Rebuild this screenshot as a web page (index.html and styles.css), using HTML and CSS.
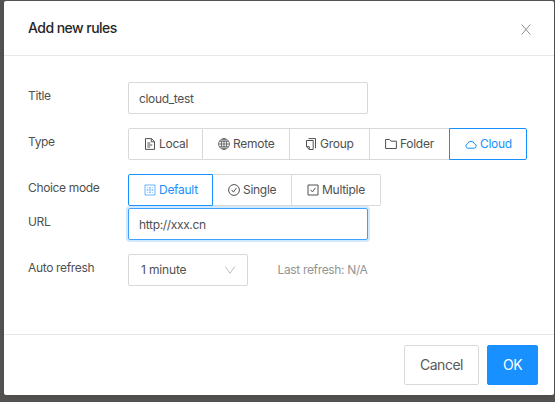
FILE: index.html
```
<!DOCTYPE html>
<html lang="en">
<head>
<meta charset="utf-8">
<title>Add new rules</title>
<link rel="stylesheet" href="styles.css">
</head>
<body>
<main class="modal">
  <header class="modal-header">
    <h1>Add new rules</h1>
    <svg class="close" viewBox="0 0 10 11"><path d="M.7.5 9.3 10.5M9.3.5.7 10.5"/></svg>
  </header>
  <form class="modal-body">
    <div class="row">
      <span class="label">Title</span>
      <div class="input">cloud_test</div>
    </div>
    <div class="row">
      <span class="label">Type</span>
      <div class="segments types">
        <div class="segment"><svg class="icon" viewBox="0 0 12 12"><path d="M1.5.6h6l3 3v7.8h-9zM7.3.6v3.2h3.2M3.3 5h3M3.3 7h5M3.3 9h3"/></svg><span>Local</span></div>
        <div class="segment"><svg class="icon globe" viewBox="0 0 12 12"><circle cx="6" cy="6" r="5.4"/><ellipse cx="6" cy="6" rx="2.6" ry="5.4"/><path d="M6 .6v10.8M.6 6h10.8M1.4 3.3h9.2M1.4 8.7h9.2"/></svg><span>Remote</span></div>
        <div class="segment"><svg class="icon" viewBox="0 0 12 12"><path d="M1.5 2.5h6.7v9H4.3L1.5 8.8zM1.5 8.7h2.8v2.8M3.5.6h7v9.6"/></svg><span>Group</span></div>
        <div class="segment"><svg class="icon" viewBox="0 0 12 12"><path d="M.6 1.5h4l1.5 1.7h5.3v7.3H.6z"/></svg><span>Folder</span></div>
        <div class="segment active"><svg class="icon" viewBox="0 0 12 12"><path d="M2.9 10.2h6.2a2.2 2.2 0 0 0 .5-4.3 3.8 3.8 0 0 0-7.2 0 2.2 2.2 0 0 0 .5 4.3z"/></svg><span>Cloud</span></div>
      </div>
    </div>
    <div class="row compact">
      <span class="label">Choice mode</span>
      <div class="segments modes">
        <div class="segment active"><svg class="icon soft" viewBox="0 0 12 12"><path d="M1 1h10v10H1z"/><path class="dots" d="M5.2 3h1.6v1.4H5.2zM5.2 5.3h1.6v1.4H5.2zM5.2 7.6h1.6V9H5.2zM2.8 5.2h1.5v1.6H2.8zM7.7 5.2h1.5v1.6H7.7zM3 3h.7v.7H3zM8.3 3H9v.7h-.7zM3 8.3h.7V9H3zM8.3 8.3H9V9h-.7z"/></svg><span>Default</span></div>
        <div class="segment"><svg class="icon" viewBox="0 0 12 12"><circle cx="6" cy="6" r="5.4"/><path d="m3.6 5.9 1.8 2.2 3.1-4.2"/></svg><span>Single</span></div>
        <div class="segment"><svg class="icon" viewBox="0 0 12 12"><path d="M1 1h10v10H1zM3.6 5.8l1.8 2.1 3-4"/></svg><span>Multiple</span></div>
      </div>
    </div>
    <div class="row">
      <span class="label">URL</span>
      <div class="input focused">http://xxx.cn</div>
    </div>
    <div class="row">
      <span class="label">Auto refresh</span>
      <div class="select"><span>1 minute</span><svg class="arrow" viewBox="0 0 12 10"><path d="M1.2 1.5 6 8.3l4.8-6.8"/></svg></div>
      <span class="hint">Last refresh: N/A</span>
    </div>
  </form>
  <footer class="modal-footer">
    <button class="button">Cancel</button>
    <button class="button primary">OK</button>
  </footer>
</main>
</body>
</html>
```

FILE: styles.css
```
* { box-sizing: border-box; }
body {
  margin: 0;
  padding: 1px 1px 7px 4px;
  height: 402px;
  overflow: hidden;
  background: #555453;
  color: #505050;
  font: 12px/18px Inter, "Liberation Sans", sans-serif;
  letter-spacing: -.34px;
}
.modal {
  display: flex;
  flex-direction: column;
  height: 394px;
  background: #fff;
  border-radius: 2px;
  box-shadow: 0 3px 10px rgba(0, 0, 0, .12);
}
.modal-header {
  display: flex;
  align-items: center;
  justify-content: space-between;
  height: 55px;
  padding: 0 23px 0 24px;
  border-bottom: 1px solid #e8e8e8;
}
h1 {
  margin: 0;
  color: #262626;
  font-size: 14px;
  font-weight: 500;
  letter-spacing: -.54px;
}
svg { fill: none; stroke: currentColor; flex: none; }
.close { width: 10px; height: 11px; margin-top: 2px; color: #8c8c8c; }
.modal-body { flex: 1; padding: 26px 24px 0; }
.row { display: flex; height: 32px; margin-bottom: 14px; }
.row.compact { margin-bottom: 2px; }
.label { width: 100px; padding-top: 5px; }
.input {
  width: 240px;
  height: 32px;
  padding: 7px 10px;
  border: 1px solid #d9d9d9;
  border-radius: 2px;
}
.input.focused { border-color: #40a0ff; box-shadow: 0 0 0 2px #d1e9ff; }
.segments { display: grid; height: 32px; }
.types { grid-template-columns: 75px 87px 80px 80px 77px; }
.modes { grid-template-columns: 85px 79px 89px; }
.segment {
  display: flex;
  align-items: center;
  gap: 3px;
  padding-left: 15px;
  border: 1px solid #d9d9d9;
  border-left-width: 0;
  letter-spacing: -.28px;
}
.segment:first-child { border-left-width: 1px; border-radius: 2px 0 0 2px; }
.segment:last-child { border-radius: 0 2px 2px 0; }
.segment.active { border-color: #1890ff; color: #1890ff; }
.types .active { border-left-width: 1px; margin-left: -1px; }
.icon { width: 12px; height: 12px; }
.globe { stroke-width: .8; }
.soft { opacity: .65; }
.dots { fill: currentColor; stroke: none; }
.select {
  display: flex;
  align-items: center;
  justify-content: space-between;
  width: 120px;
  height: 32px;
  padding: 0 11px 0 12px;
  border: 1px solid #d9d9d9;
  border-radius: 2px;
}
.select span { letter-spacing: -.15px; }
.arrow { width: 12px; height: 10px; color: #bfbfbf; }
.hint { margin-left: 29.5px; padding-top: 7px; color: #949494; }
.modal-footer {
  display: flex;
  gap: 8px;
  justify-content: flex-end;
  height: 61px;
  padding: 10px 16px 0;
  border-top: 1px solid #e8e8e8;
}
.button {
  width: 75px;
  height: 40px;
  padding: 0;
  border: 1px solid #d9d9d9;
  border-radius: 2px;
  background: #fff;
  color: #595959;
  font: 14px/20px Inter, "Liberation Sans", sans-serif;
  letter-spacing: -.5px;
}
.button.primary { width: 51px; border-color: #1890ff; background: #1890ff; color: #fff; }
```
